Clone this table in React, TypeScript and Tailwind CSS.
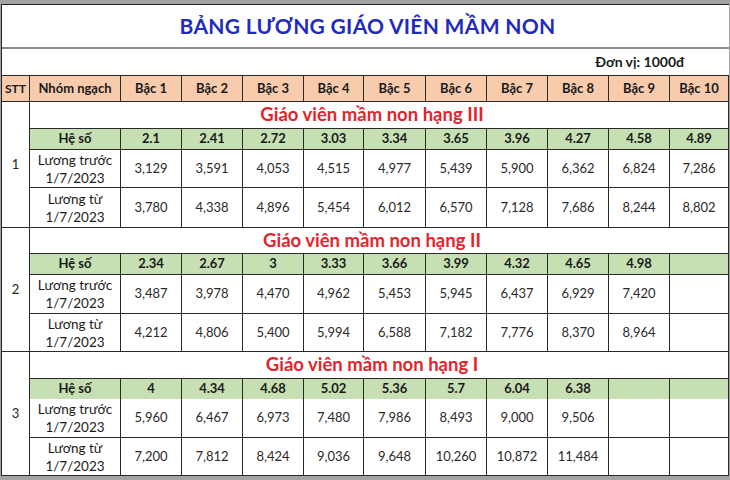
const COLS = ['Bậc 1', 'Bậc 2', 'Bậc 3', 'Bậc 4', 'Bậc 5', 'Bậc 6', 'Bậc 7', 'Bậc 8', 'Bậc 9', 'Bậc 10']

type Section = {
  stt: string
  title: string
  heSo: string[]
  truoc: string[]
  tu: string[]
  rows: [string, string, string, string]
}

const sections: Section[] = [
  {
    stt: '1',
    title: 'Giáo viên mầm non hạng III',
    heSo: ['2.1', '2.41', '2.72', '3.03', '3.34', '3.65', '3.96', '4.27', '4.58', '4.89'],
    truoc: ['3,129', '3,591', '4,053', '4,515', '4,977', '5,439', '5,900', '6,362', '6,824', '7,286'],
    tu: ['3,780', '4,338', '4,896', '5,454', '6,012', '6,570', '7,128', '7,686', '8,244', '8,802'],
    rows: ['26px', '20px', '37px', '39px'],
  },
  {
    stt: '2',
    title: 'Giáo viên mầm non hạng II',
    heSo: ['2.34', '2.67', '3', '3.33', '3.66', '3.99', '4.32', '4.65', '4.98', ''],
    truoc: ['3,487', '3,978', '4,470', '4,962', '5,453', '5,945', '6,437', '6,929', '7,420', ''],
    tu: ['4,212', '4,806', '5,400', '5,994', '6,588', '7,182', '7,776', '8,370', '8,964', ''],
    rows: ['25px', '20px', '38px', '37px'],
  },
  {
    stt: '3',
    title: 'Giáo viên mầm non hạng I',
    heSo: ['4', '4.34', '4.68', '5.02', '5.36', '5.7', '6.04', '6.38', '', ''],
    truoc: ['5,960', '6,467', '6,973', '7,480', '7,986', '8,493', '9,000', '9,506', '', ''],
    tu: ['7,200', '7,812', '8,424', '9,036', '9,648', '10,260', '10,872', '11,484', '', ''],
    rows: ['26px', '19px', '38px', '37px'],
  },
]

const font = { fontFamily: 'Lato, "Open Sans", sans-serif' }

function SectionBlock({ s }: { s: Section }) {
  return (
    <div
      className="grid gap-px"
      style={{ gridTemplateColumns: '27px 1fr', gridTemplateRows: s.rows.join(' ') }}
    >
      <div className="row-span-4 bg-white flex items-center justify-center text-[13px] text-[#222]">
        {s.stt}
      </div>
      <div className="bg-white flex items-center justify-center pr-[14px] text-[18.5px] font-bold text-[#e3242b]">
        {s.title}
      </div>
      <div className="grid grid-cols-[90px_60px_60px_60px_59px_61px_60px_60px_60px_60px_58px] gap-px">
        <div className="bg-[#c6e0b4] flex items-center justify-center text-[13px] font-bold text-[#1a1a1a]">Hệ số</div>
        {s.heSo.map((v, i) => (
          <div key={i} className="bg-[#c6e0b4] flex items-center justify-center text-[13px] font-bold text-[#1a1a1a]">
            {v}
          </div>
        ))}
      </div>
      <div className="grid grid-cols-[90px_60px_60px_60px_59px_61px_60px_60px_60px_60px_58px] gap-px">
        <div className="bg-white flex flex-col items-center justify-center text-[13.5px] leading-[18px] text-[#1a1a1a]">
          <span>Lương trước</span>
          <span>1/7/2023</span>
        </div>
        {s.truoc.map((v, i) => (
          <div key={i} className="bg-white flex items-center justify-center text-[13px] text-[#2a2a2a]">
            {v}
          </div>
        ))}
      </div>
      <div className="grid grid-cols-[90px_60px_60px_60px_59px_61px_60px_60px_60px_60px_58px] gap-px">
        <div className="bg-white flex flex-col items-center justify-center text-[13.5px] leading-[18px] text-[#1a1a1a]">
          <span>Lương từ</span>
          <span>1/7/2023</span>
        </div>
        {s.tu.map((v, i) => (
          <div key={i} className="bg-white flex items-center justify-center text-[13px] text-[#2a2a2a]">
            {v}
          </div>
        ))}
      </div>
    </div>
  )
}

export default function App() {
  return (
    <div className="w-[730px] h-[480px] bg-[#a3a3a3] pt-1 pl-px overflow-hidden" style={font}>
      <div className="w-[728px] bg-white border-t border-l border-[#222]">
        <div className="h-[44px] flex items-center justify-center border-b-2 border-[#8a8a8a]">
          <h1 className="text-[21px] font-bold text-[#1f2bbf] tracking-[0.3px] pl-1">BẢNG LƯƠNG GIÁO VIÊN MẦM NON</h1>
        </div>
        <div className="h-[26px] flex items-end justify-end pr-[45px] pb-[3px] text-[14px] font-bold text-[#1a1a1a]">
          Đơn vị: 1000đ
        </div>
        <div className="bg-[#2a2a2a] flex flex-col gap-px pt-px pr-px pb-px">
          <div className="grid grid-cols-[27px_90px_60px_60px_60px_59px_61px_60px_60px_60px_60px_58px] gap-px h-[25px]">
            <div className="bg-[#f8cbad] flex items-center justify-center text-[12px] font-bold text-[#1a1a1a]">STT</div>
            <div className="bg-[#f8cbad] flex items-center justify-center text-[13px] font-bold text-[#1a1a1a]">Nhóm ngạch</div>
            {COLS.map((c) => (
              <div key={c} className="bg-[#f8cbad] flex items-center justify-center text-[13px] font-bold text-[#1a1a1a]">
                {c}
              </div>
            ))}
          </div>
          {sections.map((s) => (
            <SectionBlock key={s.stt} s={s} />
          ))}
        </div>
      </div>
    </div>
  )
}
